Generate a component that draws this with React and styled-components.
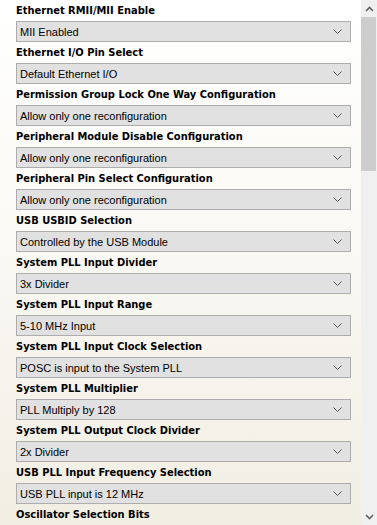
import React from "react";
import styled, { createGlobalStyle } from "styled-components";

const Global = createGlobalStyle`
  html, body { margin: 0; padding: 0; }
  body { width: 377px; height: 525px; overflow: hidden; background: #fff; }
`;

const Frame = styled.div`
  display: flex;
  width: 377px;
  height: 525px;
  overflow: hidden;
`;

const Content = styled.div`
  width: 361px;
  height: 525px;
  overflow: hidden;
  background: linear-gradient(180deg, #ffffff 0%, #fbfaf6 40%, #f1eee3 100%);
  padding-left: 16px;
  box-sizing: border-box;
`;

const Row = styled.div`
  display: flex;
  flex-direction: column;
  width: 335px;
`;

const Label = styled.div`
  height: 21px;
  line-height: 22px;
  font-family: "DejaVu Sans Condensed", "DejaVu Sans", Verdana, sans-serif;
  font-stretch: condensed;
  font-weight: bold;
  font-size: 11px;
  color: #000;
  white-space: nowrap;
`;

const Select = styled.div`
  height: 21px;
  box-sizing: border-box;
  border: 1px solid #adadad;
  background: #e1e1e1;
  display: flex;
  align-items: center;
  justify-content: space-between;
  padding: 0 8px 0 3px;
  font-family: "Liberation Sans", Arial, sans-serif;
  font-size: 11px;
  color: #000;
`;

const Chevron = () => (
  <svg width="9" height="5" viewBox="0 0 9 5">
    <path d="M0.5 0.5 L4.5 4.5 L8.5 0.5" fill="none" stroke="#5a5a5a" strokeWidth="1" />
  </svg>
);

const Scrollbar = styled.div`
  width: 16px;
  height: 525px;
  background: #f0f0f0;
  display: flex;
  flex-direction: column;
`;

const ArrowBtn = styled.div`
  height: 17px;
  display: flex;
  align-items: center;
  justify-content: center;
`;

const Track = styled.div`
  flex: 1;
  display: flex;
  flex-direction: column;
`;

const Thumb = styled.div`
  width: 15px;
  height: 154px;
  background: #cdcdcd;
`;

const Arrow = ({ down }) => (
  <svg width="9" height="6" viewBox="0 0 9 6">
    <path
      d={down ? "M1 1 L4.5 4.5 L8 1" : "M1 5 L4.5 1.5 L8 5"}
      fill="none"
      stroke="#606060"
      strokeWidth="1.6"
    />
  </svg>
);

const items = [
  ["Ethernet RMII/MII Enable", "MII Enabled"],
  ["Ethernet I/O Pin Select", "Default Ethernet I/O"],
  ["Permission Group Lock One Way Configuration", "Allow only one reconfiguration"],
  ["Peripheral Module Disable Configuration", "Allow only one reconfiguration"],
  ["Peripheral Pin Select Configuration", "Allow only one reconfiguration"],
  ["USB USBID Selection", "Controlled by the USB Module"],
  ["System PLL Input Divider", "3x Divider"],
  ["System PLL Input Range", "5-10 MHz Input"],
  ["System PLL Input Clock Selection", "POSC is input to the System PLL"],
  ["System PLL Multiplier", "PLL Multiply by 128"],
  ["System PLL Output Clock Divider", "2x Divider"],
  ["USB PLL Input Frequency Selection", "USB PLL input is 12 MHz"],
  ["Oscillator Selection Bits", "Primary Osc (HS,EC)"],
];

export default function App() {
  return (
    <>
      <Global />
      <Frame>
        <Content>
          {items.map(([label, value]) => (
            <Row key={label}>
              <Label>{label}</Label>
              <Select>
                <span>{value}</span>
                <Chevron />
              </Select>
            </Row>
          ))}
        </Content>
        <Scrollbar>
          <ArrowBtn><Arrow /></ArrowBtn>
          <Track><Thumb /></Track>
          <ArrowBtn><Arrow down /></ArrowBtn>
        </Scrollbar>
      </Frame>
    </>
  );
}
